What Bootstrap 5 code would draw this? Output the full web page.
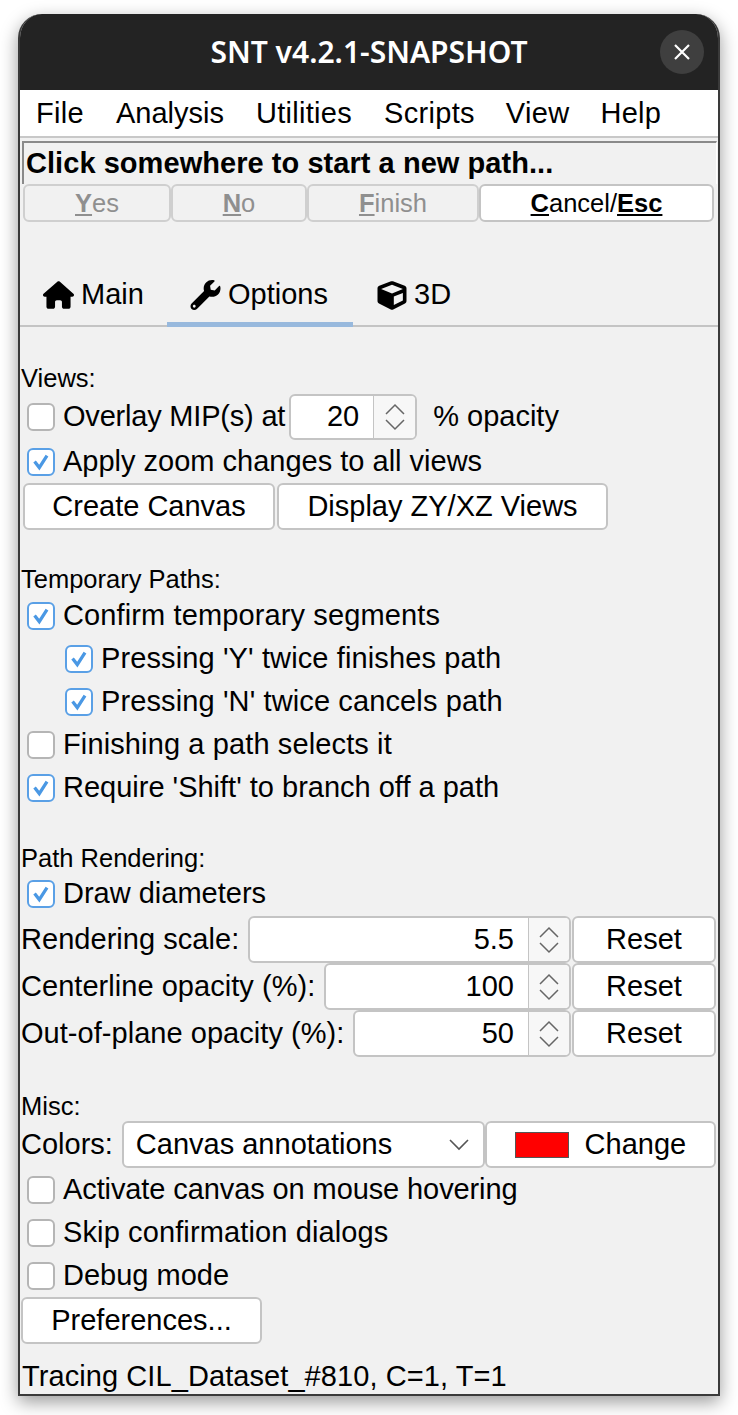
<!DOCTYPE html>
<html lang="en">
<head>
<meta charset="utf-8">
<title>SNT</title>
<link href="https://cdn.jsdelivr.net/npm/bootstrap@5.3.0/dist/css/bootstrap.min.css" rel="stylesheet">
<style>
html,body{background:#fff;height:100%;overflow:hidden}
body{font-family:"Liberation Sans",Arial,sans-serif;font-size:29px;color:#000;line-height:1.15}
.snt-win{width:702px;height:1382px;margin:14px 0 0 18px;border:2px solid #3a3a3a;border-top:0;border-radius:24px 24px 0 0;background:#f1f1f1;box-shadow:0 6px 18px rgba(0,0,0,.4);overflow:hidden}
.snt-title{height:76px;flex:none;background:#232323;color:#fff;font-family:"Noto Sans",sans-serif;font-weight:600;font-size:30px;position:relative}
.snt-close{position:absolute;right:14px;top:16px;width:44px;height:44px;border-radius:50%;background:#3f3f3f;border:0;padding:0}
.snt-menu{height:48px;flex:none;background:#fff;border-bottom:2px solid #c8c8c8;padding:2px 0 0 16px;gap:32px;letter-spacing:.3px}
.snt-ls0{letter-spacing:0}
.snt-pull{margin-left:-1px}
.snt-status{height:43px;flex:none;margin:3px 1px 0 2px;padding-left:2px;border-top:2px solid #8a8a8a;border-left:2px solid #8a8a8a;border-right:1px solid #fff;font-weight:700;font-size:29px;letter-spacing:.05px}
.snt-btn{--bs-btn-padding-x:0;--bs-btn-padding-y:0;--bs-btn-font-size:29px;--bs-btn-border-radius:6px;--bs-btn-line-height:1;background:#fff;border:2px solid #c4c4c4;color:#000;height:47px;display:flex;align-items:center;justify-content:center;flex:none}
.snt-acts{margin:0 0 0 3px}
.snt-acts .snt-btn{height:38px;font-size:25.5px;padding-top:2px}
.snt-acts .snt-off{background:#f1f1f1;color:#8f8f8f;opacity:1;border-color:#cfcfcf}
.snt-w1{width:148px}.snt-w2{width:136px}.snt-w3{width:172px}.snt-w4{width:235px}
.snt-tabs{margin-top:45px;height:60px;flex:none;border-bottom:2px solid #c4c4c4;padding-left:2px}
.snt-tab{height:58px;gap:7px;position:relative;color:#000;padding-bottom:2px}
.snt-tab svg{flex:none}
.snt-tab-main{width:145px;padding-left:21px}
.snt-tab-on{width:186px;padding-left:23px}
.snt-tab-on::after{content:"";position:absolute;left:0;right:0;bottom:-2px;height:5px;background:#98b9dd}
.snt-tab-3d{width:116px;padding-left:24px}
.snt-sec{font-size:25.5px;padding-left:1px;height:30px;flex:none;display:flex;align-items:center}
.snt-chk{height:43px;flex:none;padding-left:7px;gap:8px}
.snt-chk .form-check-input{width:28px;height:28px;margin:0;float:none;flex:none;background-color:#fff;border:2px solid #b5b5b5;border-radius:6px;box-shadow:none}
.snt-chk .form-check-input:checked{background-color:#fff;border-color:#5aa0e6;background-image:url("data:image/svg+xml,%3csvg xmlns='http://www.w3.org/2000/svg' viewBox='0 0 28 28'%3e%3cpath fill='none' stroke='%234a98e4' stroke-width='3.8' d='M6.5 13.5l5.5 7 9-14'/%3e%3c/svg%3e");background-size:100% 100%}
.snt-sub{padding-left:45px}
.snt-wide{letter-spacing:.12px}
.snt-tight{letter-spacing:-.1px}
.snt-tighter{letter-spacing:-.2px}
.snt-spin{background:#fff;border:2px solid #c4c4c4;border-radius:6px;height:47px;overflow:hidden}
.snt-spin .snt-val{flex:1;text-align:right;padding-right:14px}
.snt-arrows{width:41px;flex:none;border-left:1px solid #c4c4c4;background:#f7f7f7;height:100%}
.snt-row{height:47px;flex:none;padding:0 2px 0 1px;gap:9px}
.snt-row .snt-lab{flex:none;letter-spacing:.04px}
.snt-row .snt-spin{flex:1;margin-right:-8px;min-width:0}
.snt-reset{width:144px}
.snt-swatch{width:54px;height:26px;background:#f00;border:1px solid #555;flex:none}
.snt-sel{background:#fff;border:2px solid #c4c4c4;border-radius:6px;height:47px;padding:0 14px 0 12px;width:363px;flex:none}
.snt-views-sec{margin-top:37px}
.snt-overlay{height:46px}
.snt-mini{width:128px;height:46px;margin-left:-4px;margin-right:8px}
.snt-mini .snt-arrows{width:42px}
.snt-apply{height:43px}
.snt-views-btns{padding-left:3px;gap:2px}
.snt-canvas{width:252px}
.snt-display{width:331px}
.snt-temp-sec{margin-top:35px}
.snt-confirm{margin-top:-1px}
.snt-path-sec{margin-top:35px}
.snt-draw{margin-top:-2px;margin-bottom:1px}
.snt-misc-sec{margin-top:35px}
.snt-colors{padding-left:1px;gap:9px;height:47px;flex:none;margin-top:-1px}
.snt-change{width:231px;gap:16px;margin-left:-9px}
.snt-prefs-wrap{padding-left:1px}
.snt-prefs{width:241px}
.snt-foot{padding-left:2px;margin-top:16px;height:34px;letter-spacing:.08px}
</style>
</head>
<body>
<div class="snt-win d-flex flex-column">
  <div class="snt-title d-flex align-items-center justify-content-center">SNT v4.2.1-SNAPSHOT
    <button class="snt-close d-flex align-items-center justify-content-center" type="button" aria-label="Close">
      <svg width="18" height="18" viewBox="0 0 18 18"><path d="M2 2l14 14M16 2L2 16" stroke="#fff" stroke-width="2.2" fill="none"/></svg>
    </button>
  </div>
  <div class="snt-menu d-flex align-items-center"><span>File</span><span class="snt-ls0">Analysis</span><span>Utilities</span><span>Scripts</span><span class="snt-pull">View</span><span class="snt-pull">Help</span></div>
  <div class="snt-status d-flex align-items-center">Click somewhere to start a new path...</div>
  <div class="snt-acts d-flex">
    <button class="btn snt-btn snt-off snt-w1" type="button" disabled><span><b><u>Y</u></b>es</span></button>
    <button class="btn snt-btn snt-off snt-w2" type="button" disabled><span><b><u>N</u></b>o</span></button>
    <button class="btn snt-btn snt-off snt-w3" type="button" disabled><span><b><u>F</u></b>inish</span></button>
    <button class="btn snt-btn snt-w4" type="button"><span><b><u>C</u></b>ancel/<b><u>Esc</u></b></span></button>
  </div>
  <div class="snt-tabs d-flex">
    <div class="snt-tab snt-tab-main d-flex align-items-center">
      <svg width="31" height="28" viewBox="0 0 576 512"><path d="M575.8 255.5c0 18-15 32.1-32 32.1h-32l.7 160.2c0 2.7-.2 5.4-.5 8.1V472c0 22.1-17.9 40-40 40H456c-1.1 0-2.2 0-3.3-.1c-1.4 .1-2.8 .1-4.2 .1H416 392c-22.1 0-40-17.9-40-40V448 384c0-17.7-14.3-32-32-32H256c-17.7 0-32 14.3-32 32v64 24c0 22.1-17.9 40-40 40H160 128.1c-1.5 0-3-.1-4.5-.2c-1.2 .1-2.4 .2-3.6 .2H104c-22.1 0-40-17.9-40-40V360c0-.9 0-1.9 .1-2.8V287.6H32c-18 0-32-14-32-32.1c0-9 3-17 10-24L266.4 8c7-7 15-8 22-8s15 2 21 7L564.8 231.5c8 7 12 15 11 24z"/></svg><span>Main</span>
    </div>
    <div class="snt-tab snt-tab-on d-flex align-items-center">
      <svg width="31" height="30" viewBox="0 0 512 512"><path d="M507.73 109.1c-2.24-9.03-13.54-12.09-20.12-5.51l-74.36 74.36-67.88-11.31-11.31-67.88 74.36-74.36c6.62-6.62 3.43-17.9-5.66-20.16-47.38-11.74-99.55.91-136.58 37.93-39.64 39.64-50.55 97.1-34.05 147.2L18.74 402.76c-24.99 24.99-24.99 65.51 0 90.5 24.99 24.99 65.51 24.99 90.5 0l213.21-213.21c50.12 16.71 107.47 5.68 147.37-34.22 37.07-37.07 49.7-89.32 37.91-136.73zM64 472c-13.25 0-24-10.75-24-24 0-13.26 10.75-24 24-24s24 10.74 24 24c0 13.25-10.75 24-24 24z"/></svg><span>Options</span>
    </div>
    <div class="snt-tab snt-tab-3d d-flex align-items-center">
      <svg width="30" height="29" viewBox="0 0 512 512"><path d="M239.1 6.3l-208 78c-18.7 7-31.1 25-31.1 45v225.1c0 18.2 10.3 34.8 26.5 42.9l208 104c13.5 6.8 29.4 6.8 42.9 0l208-104c16.3-8.1 26.5-24.8 26.5-42.9V129.3c0-20-12.4-37.9-31.1-44.9l-208-78C262 2.2 250 2.2 239.1 6.3zM256 68.4l192 72v1.1l-192 78-192-78v-1.1l192-72zm32 356V275.5l160-65v133.9l-160 80z"/></svg><span>3D</span>
    </div>
  </div>

  <div class="snt-sec snt-views-sec">Views:</div>
  <div class="d-flex align-items-center snt-chk snt-overlay">
    <input class="form-check-input" type="checkbox" aria-label="Overlay">
    <span class="snt-tighter">Overlay MIP(s) at</span>
    <div class="snt-spin snt-mini d-flex align-items-center">
      <div class="snt-val">20</div>
      <div class="snt-arrows d-flex align-items-center justify-content-center"><svg width="22" height="30" viewBox="0 0 22 30"><path d="M2 12l9-9 9 9M2 18l9 9 9-9" fill="none" stroke="#666" stroke-width="1.5"/></svg></div>
    </div>
    <span>% opacity</span>
  </div>
  <div class="d-flex align-items-center snt-chk snt-apply"><input class="form-check-input" type="checkbox" checked aria-label="Apply"><span>Apply zoom changes to all views</span></div>
  <div class="d-flex snt-views-btns">
    <button class="btn snt-btn snt-canvas" type="button">Create Canvas</button>
    <button class="btn snt-btn snt-display" type="button">Display ZY/XZ Views</button>
  </div>

  <div class="snt-sec snt-temp-sec">Temporary Paths:</div>
  <div class="d-flex align-items-center snt-chk snt-confirm"><input class="form-check-input" type="checkbox" checked aria-label="Confirm"><span class="snt-wide">Confirm temporary segments</span></div>
  <div class="d-flex align-items-center snt-chk snt-sub"><input class="form-check-input" type="checkbox" checked aria-label="Y"><span class="snt-wide">Pressing 'Y' twice finishes path</span></div>
  <div class="d-flex align-items-center snt-chk snt-sub"><input class="form-check-input" type="checkbox" checked aria-label="N"><span class="snt-wide">Pressing 'N' twice cancels path</span></div>
  <div class="d-flex align-items-center snt-chk"><input class="form-check-input" type="checkbox" aria-label="Finishing"><span class="snt-wide">Finishing a path selects it</span></div>
  <div class="d-flex align-items-center snt-chk"><input class="form-check-input" type="checkbox" checked aria-label="Shift"><span>Require 'Shift' to branch off a path</span></div>

  <div class="snt-sec snt-path-sec">Path Rendering:</div>
  <div class="d-flex align-items-center snt-chk snt-draw"><input class="form-check-input" type="checkbox" checked aria-label="Draw"><span>Draw diameters</span></div>
  <div class="d-flex align-items-center snt-row"><span class="snt-lab">Rendering scale:</span>
    <div class="snt-spin d-flex align-items-center"><div class="snt-val">5.5</div><div class="snt-arrows d-flex align-items-center justify-content-center"><svg width="22" height="30" viewBox="0 0 22 30"><path d="M2 12l9-9 9 9M2 18l9 9 9-9" fill="none" stroke="#666" stroke-width="1.5"/></svg></div></div>
    <button class="btn snt-btn snt-reset" type="button">Reset</button></div>
  <div class="d-flex align-items-center snt-row"><span class="snt-lab">Centerline opacity (%):</span>
    <div class="snt-spin d-flex align-items-center"><div class="snt-val">100</div><div class="snt-arrows d-flex align-items-center justify-content-center"><svg width="22" height="30" viewBox="0 0 22 30"><path d="M2 12l9-9 9 9M2 18l9 9 9-9" fill="none" stroke="#666" stroke-width="1.5"/></svg></div></div>
    <button class="btn snt-btn snt-reset" type="button">Reset</button></div>
  <div class="d-flex align-items-center snt-row"><span class="snt-lab">Out-of-plane opacity (%):</span>
    <div class="snt-spin d-flex align-items-center"><div class="snt-val">50</div><div class="snt-arrows d-flex align-items-center justify-content-center"><svg width="22" height="30" viewBox="0 0 22 30"><path d="M2 12l9-9 9 9M2 18l9 9 9-9" fill="none" stroke="#666" stroke-width="1.5"/></svg></div></div>
    <button class="btn snt-btn snt-reset" type="button">Reset</button></div>

  <div class="snt-sec snt-misc-sec">Misc:</div>
  <div class="d-flex align-items-center snt-colors">
    <span>Colors:</span>
    <div class="snt-sel d-flex align-items-center justify-content-between"><span>Canvas annotations</span><svg width="20" height="12" viewBox="0 0 20 12"><path d="M1 1l9 9 9-9" fill="none" stroke="#555" stroke-width="1.6"/></svg></div>
    <button class="btn snt-btn snt-change" type="button"><span class="snt-swatch"></span>Change</button>
  </div>
  <div class="d-flex align-items-center snt-chk"><input class="form-check-input" type="checkbox" aria-label="Activate"><span class="snt-tight">Activate canvas on mouse hovering</span></div>
  <div class="d-flex align-items-center snt-chk"><input class="form-check-input" type="checkbox" aria-label="Skip"><span class="snt-wide">Skip confirmation dialogs</span></div>
  <div class="d-flex align-items-center snt-chk"><input class="form-check-input" type="checkbox" aria-label="Debug"><span>Debug mode</span></div>
  <div class="d-flex snt-prefs-wrap"><button class="btn snt-btn snt-prefs" type="button">Preferences...</button></div>
  <div class="snt-foot d-flex align-items-center">Tracing CIL_Dataset_#810, C=1, T=1</div>
</div>
<script src="https://cdn.jsdelivr.net/npm/bootstrap@5.3.0/dist/js/bootstrap.bundle.min.js"></script>
</body>
</html>
